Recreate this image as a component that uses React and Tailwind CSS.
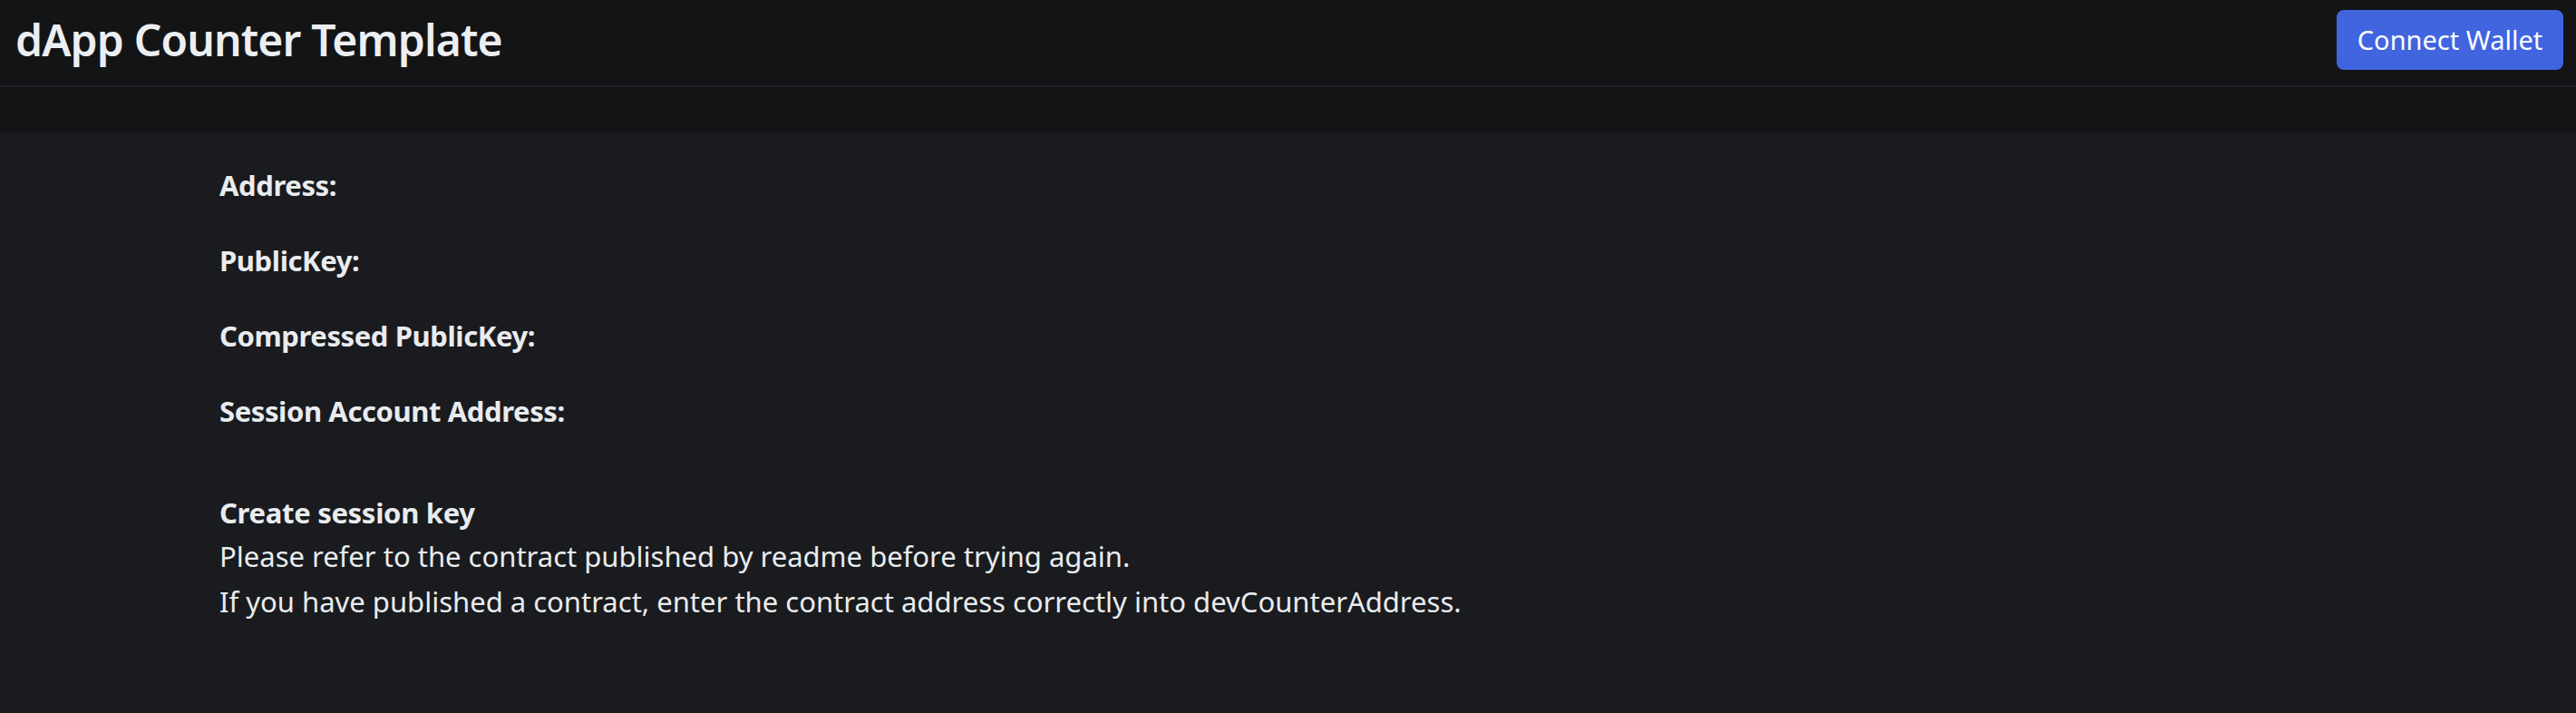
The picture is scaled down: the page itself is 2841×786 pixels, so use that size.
import React from 'react'

const FONT = { fontFamily: '"Noto Sans", "Open Sans", sans-serif' }

function InfoLine({ label }) {
  return <p className="text-[31px] leading-[50px] font-bold tracking-[-0.4px] text-[#e9ecef]">{label}</p>
}

export default function App() {
  return (
    <div className="min-h-[786px] bg-[#1a1b1e]" style={FONT}>
      <header className="bg-[#131416] border-b-2 border-[#1e1f22]">
        <div className="h-[88px] flex items-center justify-between pl-[17px] pr-[14px] pb-[1px]">
          <h1 className="text-[48px] font-semibold text-[#eceef1] tracking-[-0.85px]">dApp Counter Template</h1>
          <button className="h-[66px] w-[250px] rounded-[8px] bg-[#4065df] text-white text-[29px]">
            Connect Wallet
          </button>
        </div>
        <div className="h-[6px]" />
      </header>
      <div className="h-[50px] bg-[#131416]" />
      <main className="pl-[242px] pt-[33px] text-[#e9ecef]">
        <div className="flex flex-col gap-[33px]">
          <InfoLine label="Address:" />
          <InfoLine label="PublicKey:" />
          <InfoLine label="Compressed PublicKey:" />
          <InfoLine label="Session Account Address:" />
        </div>
        <div className="mt-[65px] text-[31px] leading-[50px]">
          <p className="font-bold leading-[45px] tracking-[-0.3px]">Create session key</p>
          <p>Please refer to the contract published by readme before trying again.</p>
          <p>If you have published a contract, enter the contract address correctly into devCounterAddress.</p>
        </div>
      </main>
    </div>
  )
}
